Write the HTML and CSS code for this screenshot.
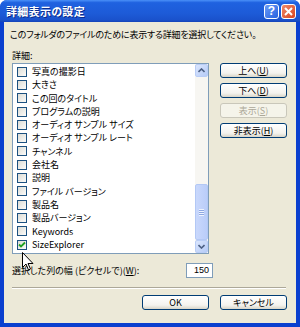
FILE: index.html
```html
<!DOCTYPE html>
<html>
<head>
  <meta charset="UTF-8">
  <title>詳細表示の設定</title>
  <link rel="stylesheet" href="styles.css">
</head>
<body>
  <div class="window">
    <div class="titlebar">
      <span class="title">詳細表示の設定</span>
      <span class="cap-btn help">?</span>
      <span class="cap-btn close">
        <svg width="9" height="9" viewBox="0 0 9 9"><path d="M1 1 L8 8 M8 1 L1 8" stroke="#fff" stroke-width="2"/></svg>
      </span>
    </div>

    <div class="client">
      <p class="desc">このフォルダのファイルのために表示する詳細を選択してください。</p>
      <div class="label">詳細:</div>

      <div class="main">
        <div class="listbox">
          <ul class="items">
            <li><span class="check"></span>写真の撮影日</li>
            <li><span class="check"></span>大きさ</li>
            <li><span class="check"></span>この回のタイトル</li>
            <li><span class="check"></span>プログラムの説明</li>
            <li><span class="check"></span>オーディオ サンプル サイズ</li>
            <li><span class="check"></span>オーディオ サンプル レート</li>
            <li><span class="check"></span>チャンネル</li>
            <li><span class="check"></span>会社名</li>
            <li><span class="check"></span>説明</li>
            <li><span class="check"></span>ファイル バージョン</li>
            <li><span class="check"></span>製品名</li>
            <li><span class="check"></span>製品バージョン</li>
            <li><span class="check"></span>Keywords</li>
            <li>
              <span class="check checked">
                <svg width="8" height="8" viewBox="0 0 8 8"><path d="M1 3.5 L3 5.5 L7 1.5" fill="none" stroke="#21a121" stroke-width="1.8"/></svg>
              </span>SizeExplorer
            </li>
          </ul>
          <div class="scrollbar">
            <div class="sb-btn">
              <svg width="7" height="5" viewBox="0 0 7 5"><path d="M0.5 4 L3.5 1 L6.5 4" fill="none" stroke="#4d6185" stroke-width="1.6"/></svg>
            </div>
            <div class="sb-track">
              <div class="sb-thumb"><span class="grip"></span></div>
            </div>
            <div class="sb-btn">
              <svg width="7" height="5" viewBox="0 0 7 5"><path d="M0.5 1 L3.5 4 L6.5 1" fill="none" stroke="#4d6185" stroke-width="1.6"/></svg>
            </div>
          </div>
        </div>

        <div class="side">
          <button class="btn">上へ(<u>U</u>)</button>
          <button class="btn">下へ(<u>D</u>)</button>
          <button class="btn" disabled>表示(<u>S</u>)</button>
          <button class="btn">非表示(<u>H</u>)</button>
        </div>
      </div>

      <div class="width-row">
        <span>選択した列の幅 (ピクセルで)(<u>W</u>):</span>
        <span class="num">150</span>
      </div>

      <div class="sep"></div>

      <div class="footer">
        <button class="btn">OK</button>
        <button class="btn">キャンセル</button>
      </div>
    </div>

    <svg class="cursor" width="12" height="19" viewBox="0 0 12 19">
      <path d="M0.5 0.5 L0.5 15.5 L4 12 L6.5 18 L8.5 17 L6 11.5 L11 11.5 Z" fill="#fff" stroke="#000" stroke-width="1"/>
    </svg>
  </div>
</body>
</html>
```

FILE: styles.css
```css
/* XP style dialog */
body {
  margin: 0;
  font-family: "Noto Sans CJK JP", sans-serif;
  font-size: 9px;
  font-feature-settings: "palt";
  color: #000;
}
.window {
  position: relative;
  width: 300px;
  height: 327px;
  background: #0a3fcf;
  border-radius: 7px 7px 0 0;
  overflow: hidden;
  display: flex;
  flex-direction: column;
}
.titlebar {
  height: 22px;
  display: flex;
  align-items: center;
  padding: 0 4px 0 6px;
  background: linear-gradient(#4a90f8, #1f62e0 12%, #1d5bd8 60%, #1a52cc 90%, #1443b8);
}
.title {
  flex: 1;
  color: #fff;
  font-size: 11px;
  font-weight: bold;
  letter-spacing: 0.3px;
  text-shadow: 1px 1px #0a2a8a;
}
.cap-btn {
  width: 15px;
  height: 15px;
  box-sizing: border-box;
  border: 1px solid #fff;
  border-radius: 3px;
  display: flex;
  align-items: center;
  justify-content: center;
  color: #fff;
  font-family: "Liberation Sans", sans-serif;
  font-weight: bold;
  font-size: 12px;
  margin-left: 2px;
}
.help {
  background: linear-gradient(135deg, #6c9bf6, #2662e0);
}
.close {
  background: linear-gradient(135deg, #ef8a6a, #d9451f);
}
.client {
  flex: 1;
  margin: 0 4px 4px 4px;
  background: #ece9d8;
  padding: 0 8px 0 8px;
  display: flex;
  flex-direction: column;
}
.desc {
  margin: 7px 0 0 -2px;
  height: 12px;
  line-height: 12px;
  letter-spacing: -0.2px;
}
.label {
  margin-top: 9px;
  height: 12px;
  line-height: 12px;
}
.main {
  display: flex;
  margin-top: 1px;
  height: 191px;
}
.listbox {
  width: 197px;
  box-sizing: border-box;
  border: 1px solid #7f9db9;
  background: #fff;
  display: flex;
}
.items {
  flex: 1;
  list-style: none;
  margin: 0;
  padding: 1px 0 0 4px;
}
.items li {
  height: 13.3px;
  line-height: 13.3px;
  display: flex;
  align-items: center;
  white-space: nowrap;
}
.check {
  width: 10px;
  height: 10px;
  box-sizing: border-box;
  border: 1px solid #1c5180;
  background: linear-gradient(135deg, #dcdcd5, #fbfbf9);
  margin-right: 5px;
  display: flex;
  align-items: center;
  justify-content: center;
}
.scrollbar {
  width: 13px;
  display: flex;
  flex-direction: column;
  background: #f7f6f2;
}
.sb-btn {
  height: 13px;
  box-sizing: border-box;
  border: 1px solid #b9cdf6;
  border-radius: 2px;
  background: linear-gradient(135deg, #dbe6fd, #b5cbf7);
  display: flex;
  align-items: center;
  justify-content: center;
}
.sb-track {
  flex: 1;
  display: flex;
  flex-direction: column;
  justify-content: flex-end;
}
.sb-thumb {
  height: 56px;
  box-sizing: border-box;
  border: 1px solid #b3c8f5;
  border-radius: 2px;
  background: linear-gradient(90deg, #c9d8fc, #bacdf9);
  display: flex;
  align-items: center;
  justify-content: center;
}
.grip {
  width: 5px;
  height: 7px;
  background: repeating-linear-gradient(#eef3fe 0 1px, #8ea8e2 1px 2px);
}
.side {
  display: flex;
  flex-direction: column;
  gap: 5px;
  margin-left: 11px;
}
.btn {
  width: 67px;
  height: 15px;
  padding: 0;
  box-sizing: border-box;
  border: 1px solid #003c74;
  border-radius: 3px;
  background: linear-gradient(#ffffff, #f4f3ee 70%, #d8d5c8);
  font-family: "Noto Sans CJK JP", sans-serif;
  font-size: 9px;
  font-feature-settings: "palt";
  line-height: 13px;
  color: #000;
}
.btn:disabled {
  border-color: #c9c7ba;
  background: #f5f4ea;
  color: #aca899;
}
.width-row {
  display: flex;
  align-items: center;
  justify-content: space-between;
  margin-top: 9px;
  height: 15px;
  padding-right: 75px;
}
.num {
  width: 27px;
  height: 15px;
  box-sizing: border-box;
  border: 1px solid #7f9db9;
  background: #fff;
  text-align: right;
  padding-right: 3px;
  line-height: 13px;
  font-family: "Liberation Sans", sans-serif;
}
.sep {
  margin-top: 9px;
  margin-right: 2px;
  height: 0;
  border-top: 1px solid #aca899;
  border-bottom: 1px solid #fff;
}
.footer {
  display: flex;
  justify-content: flex-end;
  gap: 11px;
  margin-top: 6px;
  padding-right: 1px;
}
.cursor {
  position: absolute;
  left: 22px;
  top: 252px;
}
```
